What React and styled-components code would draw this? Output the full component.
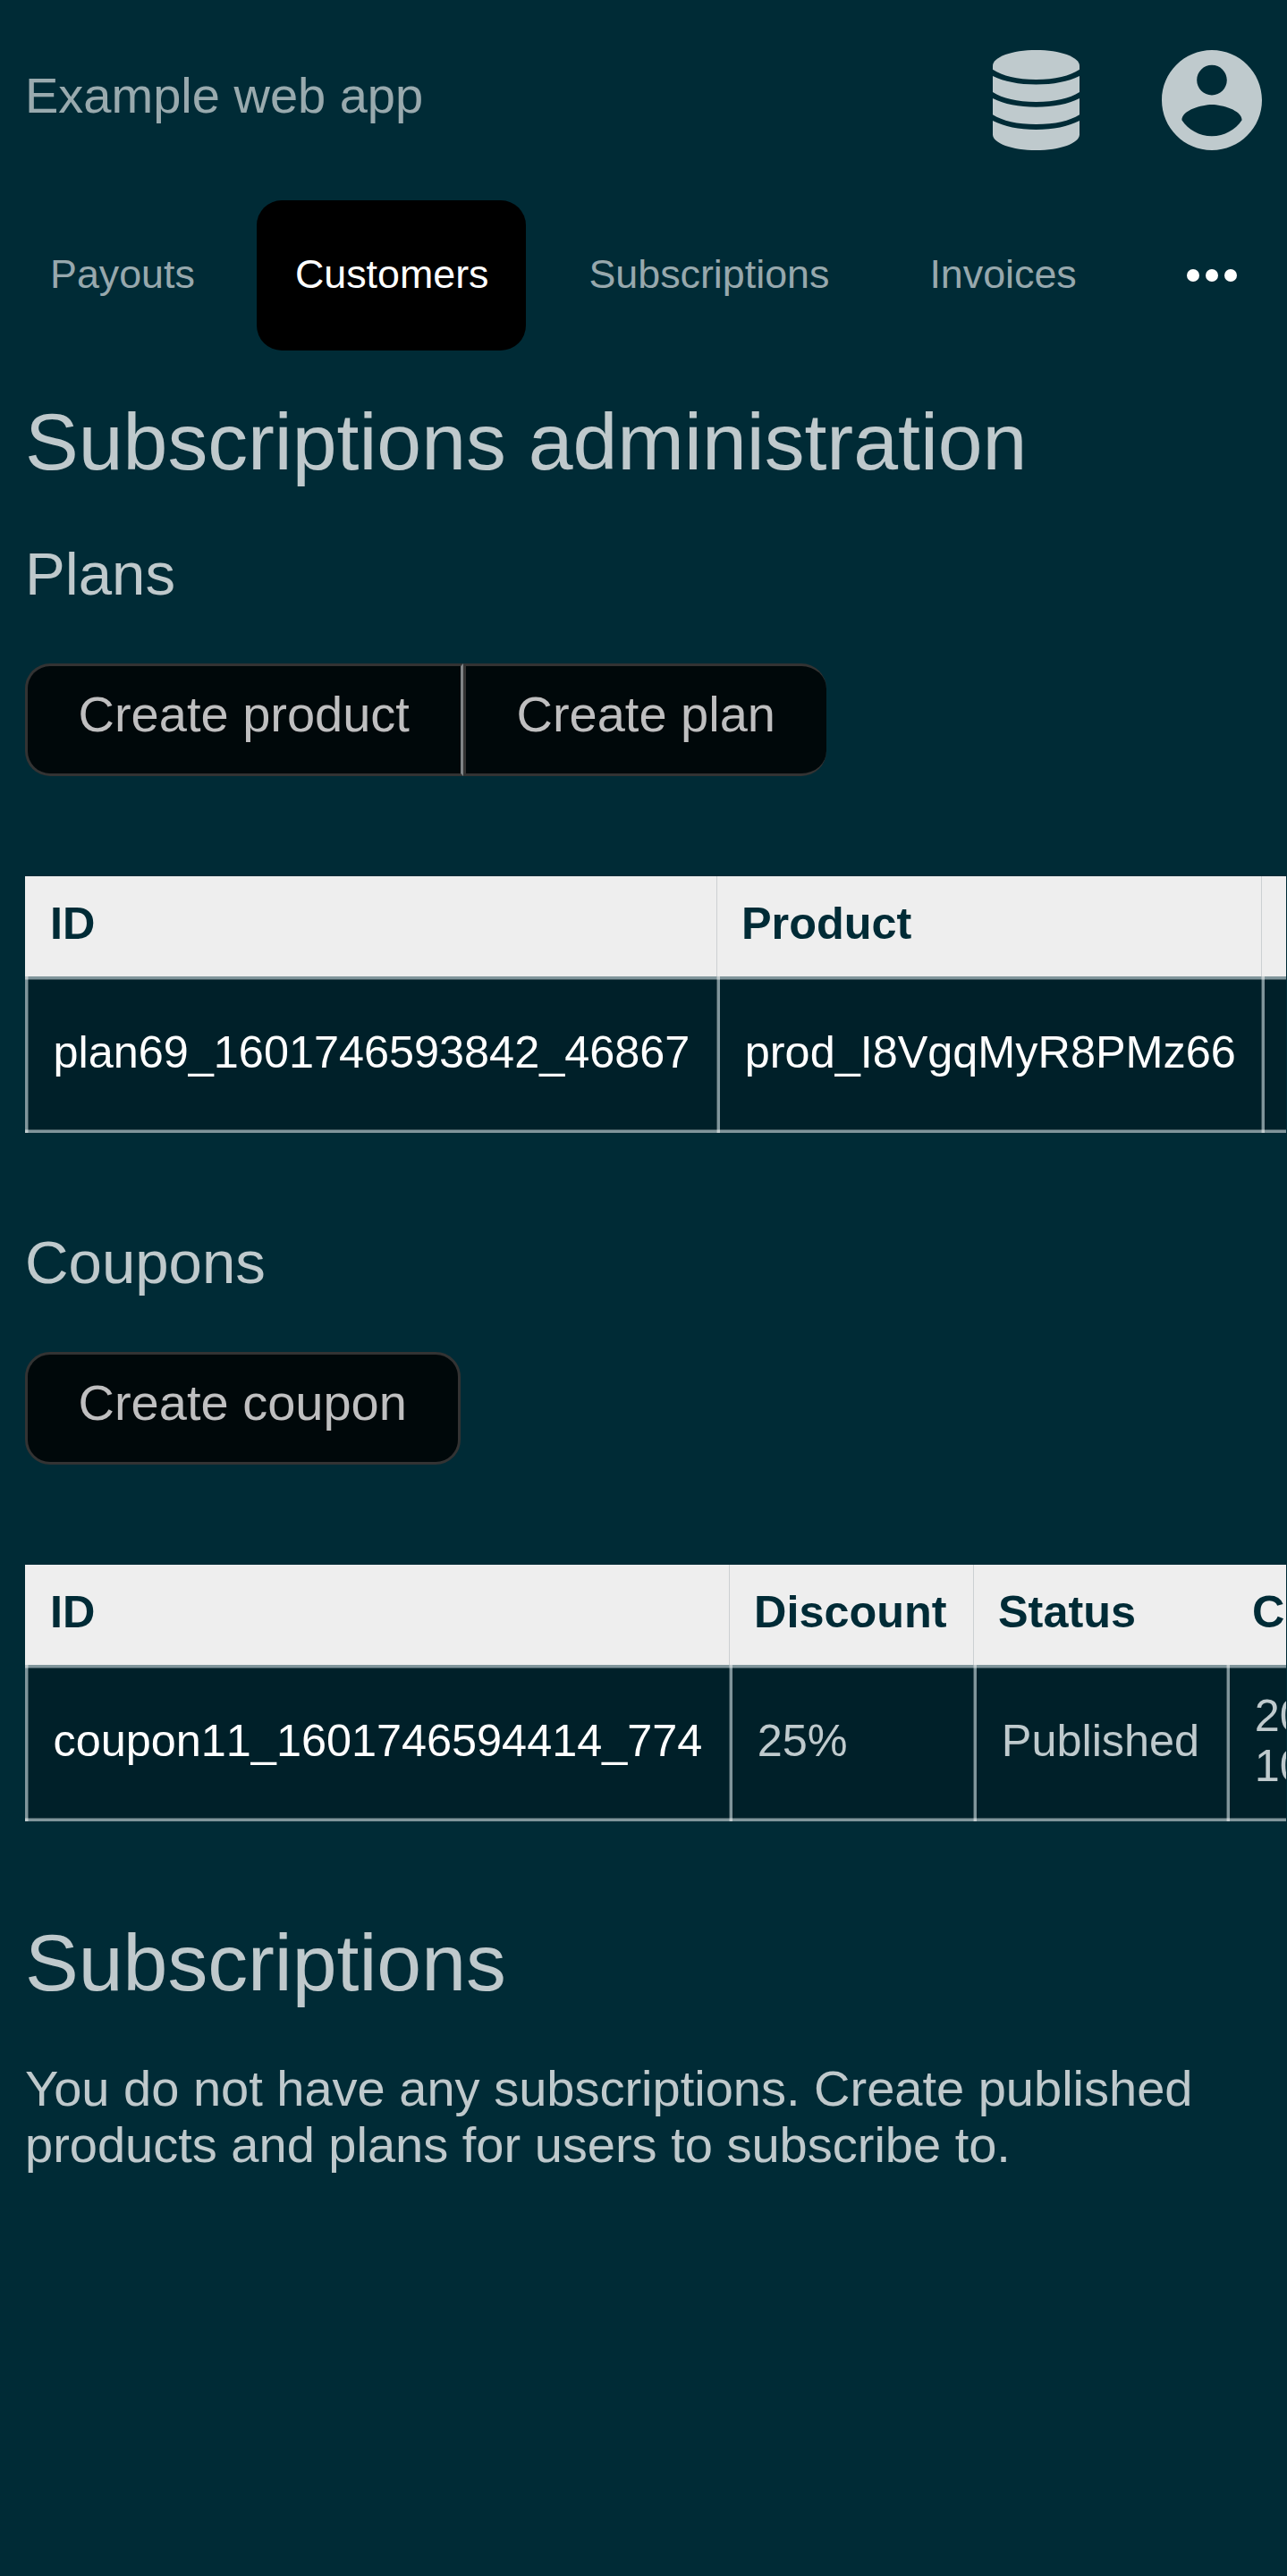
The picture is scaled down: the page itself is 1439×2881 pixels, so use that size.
import React from 'react';
import styled, { createGlobalStyle, css } from 'styled-components';

const Global = createGlobalStyle`
  html, body { margin: 0; background: #002b36; }
  body { overflow: hidden; }
  * { box-sizing: border-box; }
`;

const Page = styled.div`
  width: 100%;
  height: 2881px;
  overflow: hidden;
  background: #002b36;
  color: rgba(255, 255, 255, 0.75);
  font: 56px/63px "Liberation Sans", Arial, sans-serif;
`;
const Header = styled.header`
  display: flex;
  align-items: center;
  height: 224px;
  padding: 0 28px;
`;
const Brand = styled.div`
  flex: 1;
  color: rgba(255, 255, 255, 0.6);
  padding-bottom: 11px;
`;
const IconButton = styled.a`
  display: flex;
  width: 112px;
  height: 112px;
  justify-content: center;
  margin-left: ${(p) => p.$gap || 0}px;
  color: #bfcacd;
  svg { height: 112px; fill: currentColor; display: block; }
`;
const Nav = styled.nav`
  display: flex;
  gap: 28px;
  height: 168px;
  padding-left: 13.5px;
`;
const Tab = styled.a`
  display: flex;
  align-items: center;
  padding: 0 41.5px 5px 42.5px;
  border-radius: 28px;
  font-size: 44.8px;
  line-height: 50px;
  color: ${(p) => (p.$active ? '#fff' : 'rgba(255, 255, 255, 0.6)')};
  background: ${(p) => (p.$active ? '#000' : 'transparent')};
`;
const More = styled.div`
  display: flex;
  align-items: center;
  margin-left: auto;
  margin-right: 42.5px;
  svg { width: 84px; height: 84px; fill: #fff; display: block; }
`;
const Main = styled.main`
  margin-right: 1px;
  padding-left: 28px;
  overflow: hidden;
`;
const H1 = styled.h1`
  margin: ${(p) => p.$top}px 0 0;
  font-size: 89.6px;
  line-height: 102px;
  font-weight: 400;
`;
const H2 = styled.h2`
  margin: ${(p) => p.$top}px 0 0;
  font-size: 67.2px;
  line-height: 76px;
  font-weight: 400;
`;
const Actions = styled.div`
  display: flex;
  height: 126px;
  margin-top: 62px;
`;
const Action = styled.a`
  display: block;
  padding: 22px 57px 0 56.5px;
  border: 3px solid #333;
  background: rgba(0, 0, 0, 0.8);
  color: #bfbfc0;
  white-space: nowrap;
  ${(p) => p.$place === 'first' && css`
    border-right-color: #808486;
    border-radius: 28px 0 0 28px;
  `}
  ${(p) => p.$place === 'last' && css`
    border-right: 0;
    border-radius: 0 28px 28px 0;
  `}
  ${(p) => p.$place === 'only' && css`
    border-radius: 28px;
  `}
`;
const TableGrid = styled.div`
  display: grid;
  grid-template-columns: ${(p) => p.$columns};
  grid-template-rows: 112px 175px;
  width: max-content;
  margin-top: 112px;
  font-size: 50.4px;
  line-height: 56px;
`;
const HeadCell = styled.div`
  margin-left: ${(p) => (p.$first ? 0 : -1)}px;
  padding: 25px 0 0 ${(p) => (p.$first || p.$rule ? 27 : 28)}px;
  background: #eee;
  border-left: 1px solid ${(p) => (p.$rule ? '#ccd0d2' : '#eee')};
  color: #002b36;
  font-weight: 700;
  white-space: nowrap;
`;
/* Translucent rules brighten where a vertical one crosses a horizontal one. */
const Cell = styled.div`
  --rule: linear-gradient(rgba(255, 255, 255, 0.5), rgba(255, 255, 255, 0.5));
  --soft: linear-gradient(rgba(255, 255, 255, 0.25), rgba(255, 255, 255, 0.25));
  display: flex;
  align-items: center;
  padding: 0 0 5px ${(p) => (p.$first ? 31.5 : 30.8)}px;
  background:
    var(--rule) left top / 100% 3px no-repeat,
    var(--rule) left bottom / 100% 3px no-repeat,
    var(--rule) left top / 3px 100% no-repeat,
    var(--soft) left 0 top 3px / 100% 1px no-repeat,
    var(--soft) left 0 bottom 3px / 100% 1px no-repeat,
    ${(p) => (p.$first ? 'var(--soft) left 3px top 0 / 1px 100% no-repeat,' : '')}
    linear-gradient(#002029, #002029) 3px 3px / 100% calc(100% - 6px) no-repeat,
    #002b36;
  color: ${(p) => (p.$link ? '#fff' : '#bfcacd')};
  font-kerning: ${(p) => (p.$plain ? 'none' : 'auto')};
  white-space: nowrap;
  ${(p) => !p.$first && css`
    box-shadow: -1px 0 0 rgba(255, 255, 255, 0.22);
  `}
`;
const Empty = styled.p`
  margin: 58px 0 0;
  width: 1383px;
  line-height: 63px;
`;

const DatabaseIcon = () => (
  <svg viewBox="0 0 97 112">
    <path d="M0 17.500C0 7.800 21.700 0 48.500 0S97 7.800 97 17.500V21.700C86 29 70 32.900 48.500 32.900S11 29 0 21.700Z" />
    <path d="M0 29C13 35.300 29 38.500 48.500 38.500S84 35.300 97 29V47C86 54 70 57.900 48.500 57.900S11 54 0 47Z" />
    <path d="M0 54C13 60.400 29 63.700 48.500 63.700S84 60.400 97 54V72.200C86 79 70 83 48.500 83S11 79 0 72.200Z" />
    <path d="M0 79C13 85.600 29 88.900 48.500 88.900S84 85.600 97 79V94.500C97 104.200 75.300 112 48.500 112S0 104.200 0 94.500Z" />
  </svg>
);
const AccountIcon = () => (
  <svg viewBox="2 2 20 20">
    <path d="M12 2C6.480 2 2 6.480 2 12s4.480 10 10 10 10-4.480 10-10S17.520 2 12 2zm0 3c1.660 0 3 1.340 3 3s-1.340 3-3 3-3-1.340-3-3 1.340-3 3-3zm0 14.200c-2.500 0-4.710-1.280-6-3.220.03-1.990 4-3.080 6-3.080 1.990 0 5.970 1.090 6 3.080-1.290 1.940-3.500 3.220-6 3.220z" />
  </svg>
);
const MoreIcon = () => (
  <svg viewBox="0 0 24 24">
    <circle cx="6" cy="12" r="2" />
    <circle cx="12" cy="12" r="2" />
    <circle cx="18" cy="12" r="2" />
  </svg>
);

function DataTable({ columns, heads, cells }) {
  return (
    <TableGrid $columns={columns}>
      {heads.map((h, i) => (
        <HeadCell key={i} $first={i === 0} $rule={i === 1 || i === 2}>{h}</HeadCell>
      ))}
      {cells.map((c, i) => (
        <Cell key={i} $first={i === 0} $link={c.link} $plain={c.plain}><span>{c.text}</span></Cell>
      ))}
    </TableGrid>
  );
}

export default function App() {
  return (
    <Page>
      <Global />
      <Header>
        <Brand>Example web app</Brand>
        <IconButton><DatabaseIcon /></IconButton>
        <IconButton $gap={84.5}><AccountIcon /></IconButton>
      </Header>
      <Nav>
        <Tab>Payouts</Tab>
        <Tab $active>Customers</Tab>
        <Tab>Subscriptions</Tab>
        <Tab>Invoices</Tab>
        <More><MoreIcon /></More>
      </Nav>
      <Main>
        <H1 $top={51}>Subscriptions administration</H1>
        <H2 $top={59}>Plans</H2>
        <Actions>
          <Action $place="first">Create product</Action>
          <Action $place="last">Create plan</Action>
        </Actions>
        <DataTable
          columns="774px 609px 200px"
          heads={['ID', 'Product', '']}
          cells={[
            { text: 'plan69_1601746593842_46867', link: true },
            { text: 'prod_I8VgqMyR8PMz66', link: true },
            { text: '' },
          ]}
        />
        <H2 $top={107}>Coupons</H2>
        <Actions>
          <Action $place="only">Create coupon</Action>
        </Actions>
        <DataTable
          columns="788px 273px 283px 300px"
          heads={['ID', 'Discount', 'Status', 'Created']}
          cells={[
            { text: 'coupon11_1601746594414_774', link: true, plain: true },
            { text: '25%' },
            { text: 'Published' },
            { text: <>2020-10-03<br />10:36:34</> },
          ]}
        />
        <H1 $top={107}>Subscriptions</H1>
        <Empty>
          You do not have any subscriptions. Create published products and plans for users to subscribe to.
        </Empty>
      </Main>
    </Page>
  );
}
